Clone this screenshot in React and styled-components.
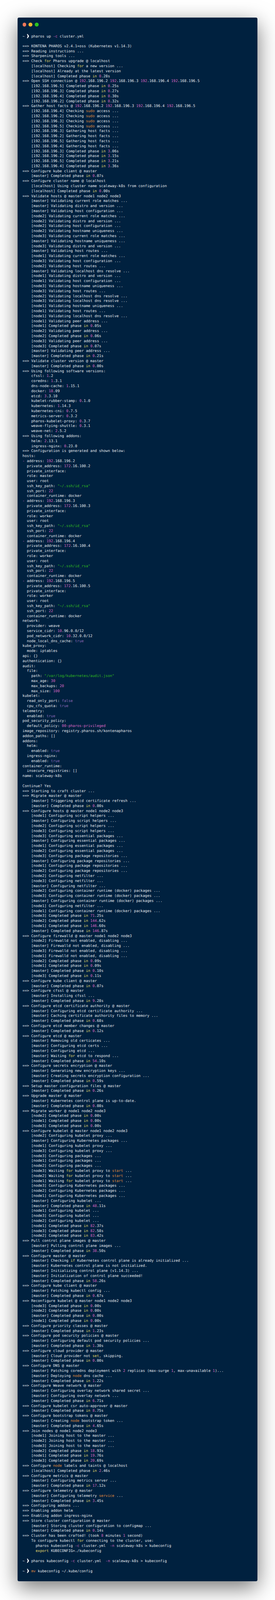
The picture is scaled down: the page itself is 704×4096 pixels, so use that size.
import React from 'react';
import styled, { createGlobalStyle } from 'styled-components';

const GlobalStyle = createGlobalStyle`
  html, body {
    margin: 0;
    padding: 0;
    background: #fff;
  }
`;

const Page = styled.div`
  width: 704px;
  height: 4096px;
  box-sizing: border-box;
  padding: 45.3px 44.8px 0;
  overflow: hidden;
`;

const Terminal = styled.div`
  box-sizing: border-box;
  height: 4002.7px;
  padding: 12.9px 12.8px 0;
  background: #00213f;
  border-radius: 4px;
  box-shadow: 0 16px 54px rgba(0, 0, 0, 0.55);
`;

const Controls = styled.div`
  display: flex;
  gap: 6.1px;
  margin-bottom: 19.4px;
`;

const Dot = styled.span`
  width: 9.6px;
  height: 9.6px;
  border-radius: 50%;
  background: ${(p) => p.$color};
`;

const Output = styled.div`
  font-family: "DejaVu Sans Mono", monospace;
  font-size: 9.3px;
  line-height: 12.8px;
  color: #e4e7ec;
  text-rendering: geometricPrecision;
`;

const Line = styled.div`
  height: 12.8px;
  white-space: pre;
`;

const tones = {
  keyword: '#e6dc6c',
  builtin: '#e08a3e',
  number: '#dc66c4',
  string: '#2fb81e',
  bool: '#8a68b8',
};

const Tok = styled.span`
  color: ${(p) => tones[p.$tone]};
`;

const PromptArrow = styled.svg`
  display: inline-block;
  width: 5.6px;
  height: 11.2px;
  vertical-align: -2px;
`;

const LOG = `$ pharos up -c cluster.yml

==> KONTENA PHAROS v2.4.1+oss (Kubernetes v1.14.3)
==> Reading instructions ...
==> Sharpening tools ...
==> Check for Pharos upgrade @ localhost
    [localhost] Checking for a new version ...
    [localhost] Already at the latest version
    [localhost] Completed phase in 0.28s
==> Open SSH connection @ 192.168.196.2 192.168.196.3 192.168.196.4 192.168.196.5
    [192.168.196.5] Completed phase in 0.25s
    [192.168.196.3] Completed phase in 0.27s
    [192.168.196.4] Completed phase in 0.30s
    [192.168.196.2] Completed phase in 0.32s
==> Gather host facts @ 192.168.196.2 192.168.196.3 192.168.196.4 192.168.196.5
    [192.168.196.4] Checking sudo access ...
    [192.168.196.2] Checking sudo access ...
    [192.168.196.3] Checking sudo access ...
    [192.168.196.5] Checking sudo access ...
    [192.168.196.3] Gathering host facts ...
    [192.168.196.2] Gathering host facts ...
    [192.168.196.5] Gathering host facts ...
    [192.168.196.4] Gathering host facts ...
    [192.168.196.3] Completed phase in 3.06s
    [192.168.196.2] Completed phase in 3.15s
    [192.168.196.5] Completed phase in 3.21s
    [192.168.196.4] Completed phase in 3.36s
==> Configure kube client @ master
    [master] Completed phase in 0.07s
==> Configure cluster name @ localhost
    [localhost] Using cluster name scaleway-k8s from configuration
    [localhost] Completed phase in 0.00s
==> Validate hosts @ master node1 node2 node3
    [master] Validating current role matches ...
    [master] Validating distro and version ...
    [master] Validating host configuration ...
    [node2] Validating current role matches ...
    [node2] Validating distro and version ...
    [node2] Validating host configuration ...
    [node2] Validating hostname uniqueness ...
    [node3] Validating current role matches ...
    [master] Validating hostname uniqueness ...
    [node3] Validating distro and version ...
    [master] Validating host routes ...
    [node1] Validating current role matches ...
    [node3] Validating host configuration ...
    [node2] Validating host routes ...
    [master] Validating localhost dns resolve ...
    [node1] Validating distro and version ...
    [node1] Validating host configuration ...
    [node3] Validating hostname uniqueness ...
    [node3] Validating host routes ...
    [node2] Validating localhost dns resolve ...
    [node3] Validating localhost dns resolve ...
    [node1] Validating hostname uniqueness ...
    [node1] Validating host routes ...
    [node1] Validating localhost dns resolve ...
    [node1] Validating peer address ...
    [node1] Completed phase in 0.05s
    [node2] Validating peer address ...
    [node2] Completed phase in 0.06s
    [node3] Validating peer address ...
    [node3] Completed phase in 0.07s
    [master] Validating peer address ...
    [master] Completed phase in 0.21s
==> Validate cluster version @ master
    [master] Completed phase in 0.00s
==> Using following software versions:
    cfssl: 1.2
    coredns: 1.3.1
    dns-node-cache: 1.15.1
    docker: 18.09
    etcd: 3.3.10
    kubelet-rubber-stamp: 0.1.0
    kubernetes: 1.14.3
    kubernetes-cni: 0.7.5
    metrics-server: 0.3.2
    pharos-kubelet-proxy: 0.3.7
    weave-flying-shuttle: 0.3.1
    weave-net: 2.5.2
==> Using following addons:
    helm: 2.13.1
    ingress-nginx: 0.23.0
==> Configuration is generated and shown below:
hosts:
- address: 192.168.196.2
  private_address: 172.16.100.2
  private_interface:
  role: master
  user: root
  ssh_key_path: "~/.ssh/id_rsa"
  ssh_port: 22
  container_runtime: docker
- address: 192.168.196.3
  private_address: 172.16.100.3
  private_interface:
  role: worker
  user: root
  ssh_key_path: "~/.ssh/id_rsa"
  ssh_port: 22
  container_runtime: docker
- address: 192.168.196.4
  private_address: 172.16.100.4
  private_interface:
  role: worker
  user: root
  ssh_key_path: "~/.ssh/id_rsa"
  ssh_port: 22
  container_runtime: docker
- address: 192.168.196.5
  private_address: 172.16.100.5
  private_interface:
  role: worker
  user: root
  ssh_key_path: "~/.ssh/id_rsa"
  ssh_port: 22
  container_runtime: docker
network:
  provider: weave
  service_cidr: 10.96.0.0/12
  pod_network_cidr: 10.32.0.0/12
  node_local_dns_cache: true
kube_proxy:
  mode: iptables
api: {}
authentication: {}
audit:
  file:
    path: "/var/log/kubernetes/audit.json"
    max_age: 30
    max_backups: 20
    max_size: 100
kubelet:
  read_only_port: false
  cpu_cfs_quota: true
telemetry:
  enabled: true
pod_security_policy:
  default_policy: 00-pharos-privileged
image_repository: registry.pharos.sh/kontenapharos
addon_paths: []
addons:
  helm:
    enabled: true
  ingress-nginx:
    enabled: true
container_runtime:
  insecure_registries: []
name: scaleway-k8s

Continue? Yes
==> Starting to craft cluster ...
==> Migrate master @ master
    [master] Triggering etcd certificate refresh ...
    [master] Completed phase in 0.00s
==> Configure hosts @ master node1 node2 node3
    [node1] Configuring script helpers ...
    [master] Configuring script helpers ...
    [node2] Configuring script helpers ...
    [node3] Configuring script helpers ...
    [node3] Configuring essential packages ...
    [master] Configuring essential packages ...
    [node1] Configuring essential packages ...
    [node2] Configuring essential packages ...
    [node3] Configuring package repositories ...
    [master] Configuring package repositories ...
    [node1] Configuring package repositories ...
    [node2] Configuring package repositories ...
    [node2] Configuring netfilter ...
    [node3] Configuring netfilter ...
    [master] Configuring netfilter ...
    [node2] Configuring container runtime (docker) packages ...
    [node3] Configuring container runtime (docker) packages ...
    [master] Configuring container runtime (docker) packages ...
    [node1] Configuring netfilter ...
    [node1] Configuring container runtime (docker) packages ...
    [node3] Completed phase in 71.25s
    [node2] Completed phase in 144.62s
    [node1] Completed phase in 146.60s
    [master] Completed phase in 146.87s
==> Configure firewalld @ master node1 node2 node3
    [node2] Firewalld not enabled, disabling ...
    [master] Firewalld not enabled, disabling ...
    [node3] Firewalld not enabled, disabling ...
    [node1] Firewalld not enabled, disabling ...
    [node2] Completed phase in 0.09s
    [node1] Completed phase in 0.09s
    [master] Completed phase in 0.10s
    [node3] Completed phase in 0.11s
==> Configure kube client @ master
    [master] Completed phase in 0.07s
==> Configure cfssl @ master
    [master] Installing cfssl ...
    [master] Completed phase in 9.28s
==> Configure etcd certificate authority @ master
    [master] Configuring etcd certificate authority ...
    [master] Caching certificate authority files to memory ...
    [master] Completed phase in 0.68s
==> Configure etcd member changes @ master
    [master] Completed phase in 0.12s
==> Configure etcd @ master
    [master] Removing old certicates ...
    [master] Configuring etcd certs ...
    [master] Configuring etcd ...
    [master] Waiting for etcd to respond ...
    [master] Completed phase in 54.10s
==> Configure secrets encryption @ master
    [master] Generating new encryption keys ...
    [master] Creating secrets encryption configuration ...
    [master] Completed phase in 0.59s
==> Setup master configuration files @ master
    [master] Completed phase in 0.26s
==> Upgrade master @ master
    [master] Kubernetes control plane is up-to-date.
    [master] Completed phase in 0.08s
==> Migrate worker @ node1 node2 node3
    [node2] Completed phase in 0.00s
    [node1] Completed phase in 0.00s
    [node3] Completed phase in 0.00s
==> Configure kubelet @ master node1 node2 node3
    [node2] Configuring kubelet proxy ...
    [master] Configuring Kubernetes packages ...
    [node1] Configuring kubelet proxy ...
    [node3] Configuring kubelet proxy ...
    [node3] Configuring packages ...
    [node1] Configuring packages ...
    [node2] Configuring packages ...
    [node3] Waiting for kubelet proxy to start ...
    [node2] Waiting for kubelet proxy to start ...
    [node1] Waiting for kubelet proxy to start ...
    [node3] Configuring Kubernetes packages ...
    [node2] Configuring Kubernetes packages ...
    [node1] Configuring Kubernetes packages ...
    [master] Configuring kubelet ...
    [master] Completed phase in 48.11s
    [node1] Configuring kubelet ...
    [node3] Configuring kubelet ...
    [node2] Configuring kubelet ...
    [node1] Completed phase in 82.37s
    [node3] Completed phase in 82.58s
    [node2] Completed phase in 83.42s
==> Pull control plane images @ master
    [master] Pulling control plane images ...
    [master] Completed phase in 38.50s
==> Configure master @ master
    [master] Checking if Kubernetes control plane is already initialized ...
    [master] Kubernetes control plane is not initialized.
    [master] Initializing control plane (v1.14.3) ...
    [master] Initialization of control plane succeeded!
    [master] Completed phase in 58.26s
==> Configure kube client @ master
    [master] Fetching kubectl config ...
    [master] Completed phase in 0.67s
==> Reconfigure kubelet @ master node1 node2 node3
    [node3] Completed phase in 0.00s
    [node2] Completed phase in 0.00s
    [master] Completed phase in 0.00s
    [node1] Completed phase in 0.00s
==> Configure priority classes @ master
    [master] Completed phase in 1.23s
==> Configure pod security policies @ master
    [master] Configuring default pod security policies ...
    [master] Completed phase in 1.30s
==> Configure cloud provider @ master
    [master] Cloud provider not set, skipping.
    [master] Completed phase in 0.00s
==> Configure DNS @ master
    [master] Patching coredns deployment with 2 replicas (max-surge 1, max-unavailable 1)...
    [master] Deploying node dns cache ...
    [master] Completed phase in 1.22s
==> Configure Weave network @ master
    [master] Configuring overlay network shared secret ...
    [master] Configuring overlay network ...
    [master] Completed phase in 6.71s
==> Configure kubelet csr auto-approver @ master
    [master] Completed phase in 8.75s
==> Configure bootstrap tokens @ master
    [master] Creating node bootstrap token ...
    [master] Completed phase in 4.65s
==> Join nodes @ node1 node2 node3
    [node1] Joining host to the master ...
    [node2] Joining host to the master ...
    [node3] Joining host to the master ...
    [node2] Completed phase in 18.93s
    [node1] Completed phase in 19.76s
    [node3] Completed phase in 20.69s
==> Configure node labels and taints @ localhost
    [localhost] Completed phase in 2.46s
==> Configure metrics @ master
    [master] Configuring metrics server ...
    [master] Completed phase in 17.12s
==> Configure telemetry @ master
    [master] Configuring telemetry service ...
    [master] Completed phase in 3.45s
==> Configuring addons ...
==> Enabling addon helm
==> Enabling addon ingress-nginx
==> Store cluster configuration @ master
    [master] Storing cluster configuration to configmap ...
    [master] Completed phase in 0.14s
==> Cluster has been crafted! (took 8 minutes 1 second)
    To configure kubectl for connecting to the cluster, use:
      pharos kubeconfig -c cluster.yml  -n scaleway-k8s > kubeconfig
      export KUBECONFIG=./kubeconfig

$ pharos kubeconfig -c cluster.yml  -n scaleway-k8s > kubeconfig

$ mv kubeconfig ~/.kube/config`.split('\n');

// same token order as the shell highlighter in the shot
const TOKEN = /("[^"]*")|(00-pharos-privileged|^- |(?<=\s)-[cn]\b|(?<![\w.[\/-])\d+)|(?<![\w-])(for|in|if|set|export)(?![\w-])|(?<![\w-])(sudo|start|node|service|mv)(?![\w-])|(?<=: )(true|false)$/g;

const highlight = (text) => {
  const parts = [];
  let last = 0;
  for (const m of text.matchAll(TOKEN)) {
    if (m.index > last) parts.push(text.slice(last, m.index));
    const tone = m[1] ? 'string' : m[2] ? 'number' : m[3] ? 'keyword' : m[4] ? 'builtin' : 'bool';
    parts.push(<Tok key={m.index} $tone={tone}>{m[0]}</Tok>);
    last = m.index + m[0].length;
  }
  parts.push(text.slice(last));
  return parts;
};

const Arrow = () => (
  <PromptArrow viewBox="0 0 7 14">
    <path d="M0 0 L2 0 L7 7 L2 14 L0 14 L2.5 7 Z" fill="#fff" />
  </PromptArrow>
);

const LogLine = ({ text }) => {
  if (text.startsWith('$ ')) {
    return (
      <Line>
        {'~ '}
        <Arrow />
        {' '}
        {highlight(text.slice(2))}
      </Line>
    );
  }
  return <Line>{highlight(text)}</Line>;
};

export default function App() {
  return (
    <Page>
      <GlobalStyle />
      <Terminal>
        <Controls>
          <Dot $color="#f1785a" />
          <Dot $color="#f9b62e" />
          <Dot $color="#2cc31f" />
        </Controls>
        <Output>
          {LOG.map((text, i) => (
            <LogLine key={i} text={text} />
          ))}
        </Output>
      </Terminal>
    </Page>
  );
}
